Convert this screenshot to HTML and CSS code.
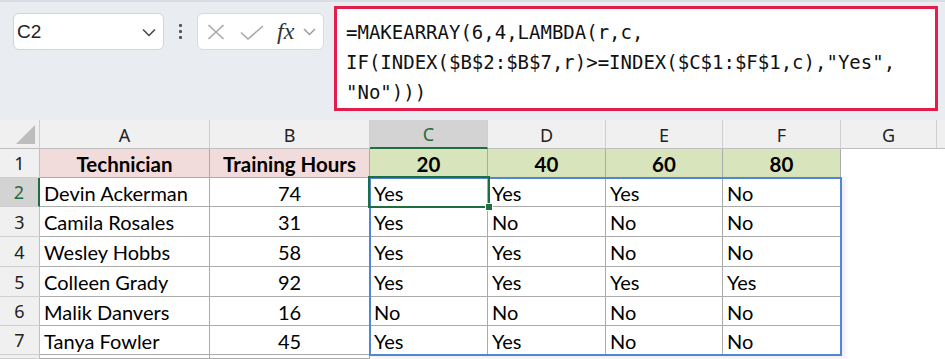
FILE: index.html
```html
<!DOCTYPE html>
<html>
<head>
<meta charset="utf-8">
<link rel="stylesheet" href="styles.css">
</head>
<body>
<div class="app">
  <div class="toolbar">
    <div class="namebox">
      <span class="nb-text">C2</span>
      <svg class="nb-chev" width="14" height="9" viewBox="0 0 14 9"><path d="M1 1.5 L7 7.5 L13 1.5" fill="none" stroke="#444" stroke-width="1.5"/></svg>
    </div>
    <div class="dots"><i></i><i></i><i></i></div>
    <div class="fbtns">
      <svg class="ico-x" width="18" height="16" viewBox="0 0 18 16"><path d="M1.5 1 L16.5 15 M16.5 1 L1.5 15" stroke="#a8a8a8" stroke-width="1.6" fill="none"/></svg>
      <svg class="ico-check" width="24" height="15" viewBox="0 0 24 15"><path d="M1 7.5 L8 14 L23 1" stroke="#a8a8a8" stroke-width="1.6" fill="none"/></svg>
      <span class="fx">fx</span>
      <svg class="ico-chev" width="13" height="8" viewBox="0 0 13 8"><path d="M1 1 L6.5 6.5 L12 1" fill="none" stroke="#999" stroke-width="1.4"/></svg>
    </div>
    <div class="formula">=MAKEARRAY(6,4,LAMBDA(r,c,<br>IF(INDEX($B$2:$B$7,r)&gt;=INDEX($C$1:$F$1,c),"Yes",<br>"No")))</div>
  </div>
  <div class="sheet-wrap">
    <div class="sheet">
      <div class="ch corner"><span class="tri"></span></div>
      <div class="ch">A</div>
      <div class="ch">B</div>
      <div class="ch sel">C</div>
      <div class="ch">D</div>
      <div class="ch">E</div>
      <div class="ch">F</div>
      <div class="ch">G</div>
      <div class="ch last"></div>

      <div class="rh">1</div>
      <div class="c hd pink">Technician</div>
      <div class="c hd pink">Training Hours</div>
      <div class="c hd green">20</div>
      <div class="c hd green">40</div>
      <div class="c hd green">60</div>
      <div class="c hd green">80</div>
      <div class="c blank"></div>
      <div class="c blank"></div>

      <div class="rh sel">2</div>
      <div class="c">Devin Ackerman</div>
      <div class="c num">74</div>
      <div class="c">Yes</div>
      <div class="c">Yes</div>
      <div class="c">Yes</div>
      <div class="c">No</div>
      <div class="c blank"></div>
      <div class="c blank"></div>

      <div class="rh">3</div>
      <div class="c">Camila Rosales</div>
      <div class="c num">31</div>
      <div class="c">Yes</div>
      <div class="c">No</div>
      <div class="c">No</div>
      <div class="c">No</div>
      <div class="c blank"></div>
      <div class="c blank"></div>

      <div class="rh">4</div>
      <div class="c">Wesley Hobbs</div>
      <div class="c num">58</div>
      <div class="c">Yes</div>
      <div class="c">Yes</div>
      <div class="c">No</div>
      <div class="c">No</div>
      <div class="c blank"></div>
      <div class="c blank"></div>

      <div class="rh">5</div>
      <div class="c">Colleen Grady</div>
      <div class="c num">92</div>
      <div class="c">Yes</div>
      <div class="c">Yes</div>
      <div class="c">Yes</div>
      <div class="c">Yes</div>
      <div class="c blank"></div>
      <div class="c blank"></div>

      <div class="rh">6</div>
      <div class="c">Malik Danvers</div>
      <div class="c num">16</div>
      <div class="c">No</div>
      <div class="c">No</div>
      <div class="c">No</div>
      <div class="c">No</div>
      <div class="c blank"></div>
      <div class="c blank"></div>

      <div class="rh">7</div>
      <div class="c">Tanya Fowler</div>
      <div class="c num">45</div>
      <div class="c">Yes</div>
      <div class="c">Yes</div>
      <div class="c">No</div>
      <div class="c">No</div>
      <div class="c blank"></div>
      <div class="c blank"></div>

      <div class="rh"></div>
      <div class="c"></div>
      <div class="c"></div>
      <div class="c blank"></div>
      <div class="c blank"></div>
      <div class="c blank"></div>
      <div class="c blank"></div>
      <div class="c blank"></div>
      <div class="c blank"></div>
    </div>
    <div class="spill"></div>
    <div class="active"><span class="handle"></span></div>
  </div>
</div>
</body>
</html>
```
FILE: styles.css
```css
* { box-sizing: border-box; }
html, body { margin: 0; padding: 0; }
body {
  width: 945px;
  height: 359px;
  overflow: hidden;
  background: #e9edf1;
  font-family: "Noto Sans", "Liberation Sans", sans-serif;
}
.app { width: 945px; height: 359px; }

.toolbar {
  height: 120px;
  display: flex;
  align-items: flex-start;
  padding-left: 13px;
  border-top: 2px solid #d9dde2;
}
.namebox {
  margin-top: 11px;
  width: 151px;
  height: 37px;
  background: #fff;
  border: 1px solid #d2d4d7;
  border-radius: 6px;
  display: flex;
  align-items: center;
  justify-content: space-between;
  padding: 0 7px 0 3px;
}
.nb-text { font-size: 19px; color: #222; font-family: "Liberation Sans", sans-serif; }
.nb-chev { margin-top: 2px; }

.dots {
  margin: 22px 0 0 15px;
  width: 4px;
  display: flex;
  flex-direction: column;
  gap: 3px;
}
.dots i { display: block; width: 3px; height: 3px; background: #555; border-radius: 1px; }

.fbtns {
  margin: 11px 0 0 14px;
  width: 127px;
  height: 37px;
  background: #fff;
  border: 1px solid #d8dadd;
  border-radius: 6px;
  display: flex;
  align-items: center;
  padding-left: 9px;
}
.ico-x { margin-top: 1px; }
.ico-check { margin-left: 15px; margin-top: 1px; }
.fx {
  margin-left: 13px;
  font-family: "Liberation Serif", serif;
  font-style: italic;
  font-size: 24px;
  color: #333;
  line-height: 1;
  margin-top: -2px;
}
.ico-chev { margin-left: 9px; }

.formula {
  margin: 4px 0 0 10px;
  width: 604px;
  height: 105px;
  background: #fff;
  border: 3px solid #e31d4b;
  padding: 8px 0 0 9px;
  font-family: "DejaVu Sans Mono", "Liberation Mono", monospace;
  font-size: 19px;
  line-height: 30px;
  color: #111;
  white-space: nowrap;
}

.sheet-wrap { position: relative; height: 239px; background: #fff; }
.sheet {
  display: grid;
  grid-template-columns: 40px 170px 160px 118px 118px 117px 118px 96px 8px;
  grid-template-rows: 29px 29px 29px 30px 30px 30px 29px 29px 4px;
  font-family: "Lato", "Liberation Sans", sans-serif;
  font-size: 20px;
  color: #000;
}
.ch {
  background: #f0f0f0;
  border-right: 1px solid #cfcfcf;
  border-bottom: 1px solid #bfbfbf;
  display: flex;
  align-items: center;
  justify-content: center;
  font-family: "Noto Sans", "Liberation Sans", sans-serif;
  font-size: 18px;
  color: #222;
  padding-top: 1px;
}
.ch.last { border-right: none; }
.ch.sel {
  background: #d3d3d3;
  color: #1e6b3d;
  border-bottom: 2px solid #1e6e40;
}
.corner { position: relative; }
.tri {
  position: absolute;
  right: 4px;
  bottom: 4px;
  width: 0; height: 0;
  border-left: 19px solid transparent;
  border-bottom: 19px solid #bdbdbd;
}
.rh {
  background: #f0f0f0;
  border-right: 1px solid #bfbfbf;
  border-bottom: 1px solid #cfcfcf;
  display: flex;
  align-items: center;
  justify-content: center;
  font-family: "Noto Sans", "Liberation Sans", sans-serif;
  font-size: 18px;
  color: #222;
}
.rh.sel {
  background: #d3d3d3;
  color: #1e6b3d;
  border-right: 2px solid #1e6e40;
}
.c {
  background: #fff;
  border-right: 1px solid #ababab;
  border-bottom: 1px solid #ababab;
  display: flex;
  align-items: center;
  padding: 1px 0 0 4px;
  white-space: nowrap;
  overflow: hidden;
}
.c.num { justify-content: center; padding-left: 0; }
.c.hd { justify-content: center; padding-left: 0; font-weight: bold; font-size: 20.5px; }
.c.pink { background: #f2dcdb; }
.c.green { background: #d8e4bc; }
.c.blank { border: none; }

.spill {
  position: absolute;
  left: 369px;
  top: 57px;
  width: 473px;
  height: 179px;
  border: 2px solid #5285d3;
  box-shadow: 3px 2px 5px rgba(0,0,0,0.08);
  pointer-events: none;
}
.active {
  position: absolute;
  left: 368px;
  top: 56px;
  width: 122px;
  height: 32px;
  border: 2px solid #1e6e40;
  pointer-events: none;
}
.handle {
  position: absolute;
  right: -5px;
  bottom: -5px;
  width: 8px;
  height: 8px;
  background: #1e6e40;
  border: 1px solid #fff;
}
```
